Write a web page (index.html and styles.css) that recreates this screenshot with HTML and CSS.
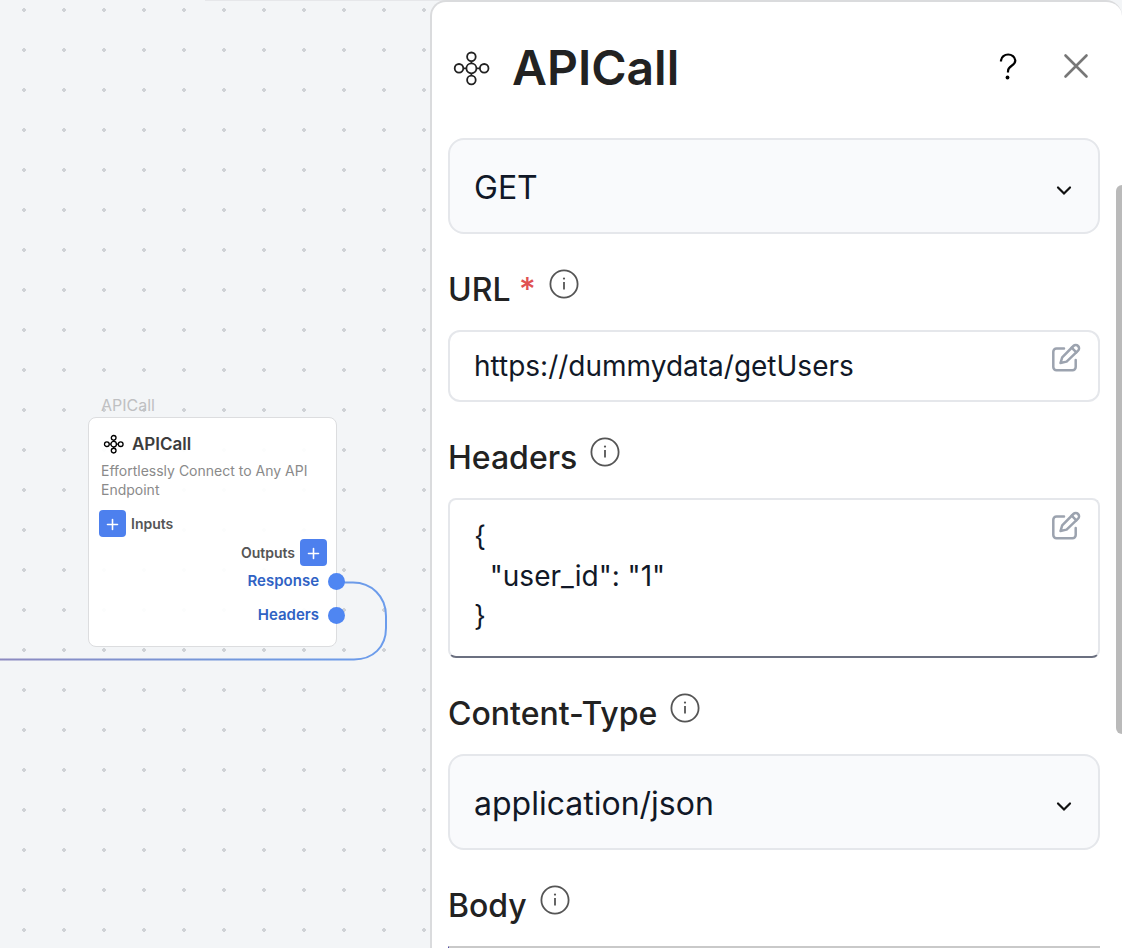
FILE: index.html
```
<!DOCTYPE html>
<html lang="en">
<head>
<meta charset="utf-8">
<meta name="viewport" content="width=device-width, initial-scale=1">
<title>APICall</title>
<link rel="stylesheet" href="styles.css">
</head>
<body>
<svg class="sprite" aria-hidden="true">
  <symbol id="hub" viewBox="0 0 40 40">
    <g fill="none" stroke="currentColor">
      <circle cx="19.4" cy="20.3" r="5"/>
      <circle cx="7" cy="20.3" r="4.3"/>
      <circle cx="32.2" cy="20.3" r="4.3"/>
      <circle cx="19.4" cy="8.8" r="4.3"/>
      <circle cx="19.4" cy="32" r="4.3"/>
      <path d="M11.3 20.3h3.1M24.4 20.3h3.5M19.4 13.1v2.2M19.4 25.3v2.4"/>
    </g>
  </symbol>
  <symbol id="info" viewBox="0 0 32 32">
    <circle cx="16" cy="16" r="13.6" fill="none" stroke="currentColor" stroke-width="1.8"/>
    <path d="M16 14v7.6" stroke="currentColor" stroke-width="1.8"/>
    <circle cx="16" cy="10.6" r="1.1" fill="currentColor"/>
  </symbol>
  <symbol id="edit" viewBox="0 0 32 32">
    <g fill="none" stroke="currentColor" stroke-width="2.5" stroke-linejoin="round" stroke-linecap="round">
      <path d="M14 6.500H6.500A3.200 3.200 0 0 0 3.300 9.700V25A3.200 3.200 0 0 0 6.500 28.200H22.500A3.200 3.200 0 0 0 25.700 25V18"/>
      <path d="M10.500 21L12.200 15.300L23.400 4A3.300 3.300 0 0 1 28.100 8.700L16.600 19.600Z"/>
      <path d="M21.700 5.700L26.300 10.300"/>
    </g>
  </symbol>
  <symbol id="chevron" viewBox="0 0 20 20">
    <path d="M4 7.500L10 13.500L16 7.500" fill="none" stroke="currentColor" stroke-width="2.200" stroke-linecap="round"/>
  </symbol>
  <symbol id="plus" viewBox="0 0 27 27">
    <path d="M13.500 9.500v10M8.500 14.500h10" stroke="currentColor" stroke-width="1.600" stroke-linecap="round"/>
  </symbol>
</svg>
<main class="app">
  <section class="canvas" aria-label="Flow canvas">
    <div class="canvas-edge"></div>
    <svg class="wire" width="400" height="100" viewBox="0 0 400 100" aria-hidden="true">
      <defs>
        <linearGradient id="wire-color" gradientUnits="userSpaceOnUse" x1="0" y1="0" x2="386" y2="0">
          <stop offset="0" stop-color="#8d8ac0"/>
          <stop offset="0.6" stop-color="#7398dc"/>
          <stop offset="1" stop-color="#6b9cec"/>
        </linearGradient>
      </defs>
      <path d="M337 12.500H353C371 12.500 386 26 386 46V58C386 77 373 89.500 354 89.500H0" fill="none" stroke="url(#wire-color)" stroke-width="2"/>
    </svg>
    <div class="node-group">
      <div class="node-tag">APICall</div>
      <article class="node">
        <h2 class="node-title"><svg class="node-icon" aria-hidden="true"><use href="#hub"/></svg>APICall</h2>
        <p class="node-text">Effortlessly Connect to Any API Endpoint</p>
        <div class="port-row"><button class="add" aria-label="Add input"><svg class="add-icon"><use href="#plus"/></svg></button>Inputs</div>
        <div class="port-row port-row-out">Outputs<button class="add" aria-label="Add output"><svg class="add-icon"><use href="#plus"/></svg></button></div>
        <div class="output output-first">Response<span class="handle"></span></div>
        <div class="output">Headers<span class="handle"></span></div>
      </article>
    </div>
  </section>
  <aside class="panel">
    <header class="panel-head">
      <svg class="panel-icon" aria-hidden="true"><use href="#hub"/></svg>
      <h1 class="panel-title">APICall</h1>
      <div class="panel-actions">
        <button class="icon-button help" aria-label="Help">
          <svg class="action-icon" viewBox="0 0 40 40"><path d="M13 15.500V14.500A7.200 6.800 0 0 1 27.300 14.500C27.300 20 20 19.500 20 25V26.500" fill="none" stroke="currentColor" stroke-width="2.200"/><circle cx="19.500" cy="31.500" r="1.900" fill="currentColor"/></svg>
        </button>
        <button class="icon-button close" aria-label="Close">
          <svg class="action-icon" viewBox="0 0 40 40"><path d="M9.500 9.500L30.500 30.500M30.500 9.500L9.500 30.500" fill="none" stroke="currentColor" stroke-width="2.600" stroke-linecap="round"/></svg>
        </button>
      </div>
    </header>
    <form class="form">
      <div class="control">
        <select class="field select" aria-label="Method"><option>GET</option><option>POST</option></select>
        <svg class="chevron" aria-hidden="true"><use href="#chevron"/></svg>
      </div>
      <div class="label-row">
        <label class="label" for="url">URL <span class="required">*</span></label>
        <button type="button" class="info" aria-label="About URL"><svg class="info-icon"><use href="#info"/></svg></button>
      </div>
      <div class="control">
        <input class="field input" id="url" type="text" value="https://dummydata/getUsers">
        <button type="button" class="edit" aria-label="Edit URL"><svg class="edit-icon"><use href="#edit"/></svg></button>
      </div>
      <div class="label-row">
        <label class="label" for="headers">Headers</label>
        <button type="button" class="info" aria-label="About headers"><svg class="info-icon"><use href="#info"/></svg></button>
      </div>
      <div class="control">
        <textarea class="field textarea" id="headers" rows="3" spellcheck="false">{
  "user_id": "1"
}</textarea>
        <button type="button" class="edit" aria-label="Edit headers"><svg class="edit-icon"><use href="#edit"/></svg></button>
      </div>
      <div class="label-row">
        <label class="label" for="type">Content-Type</label>
        <button type="button" class="info" aria-label="About content type"><svg class="info-icon"><use href="#info"/></svg></button>
      </div>
      <div class="control">
        <select class="field select" id="type"><option>application/json</option><option>text/plain</option></select>
        <svg class="chevron" aria-hidden="true"><use href="#chevron"/></svg>
      </div>
      <div class="label-row">
        <label class="label" for="body">Body</label>
        <button type="button" class="info" aria-label="About body"><svg class="info-icon"><use href="#info"/></svg></button>
      </div>
      <textarea class="field body-field" id="body" rows="3"></textarea>
    </form>
    <div class="scroll-thumb"></div>
  </aside>
</main>
</body>
</html>
```
FILE: styles.css
```
* { box-sizing: border-box; }
body {
  margin: 0;
  font-family: Inter, "Liberation Sans", sans-serif;
  color: #222;
  background: #f3f5f7;
}
button {
  padding: 0;
  border: 0;
  background: none;
  color: inherit;
  cursor: pointer;
}
.sprite { position: absolute; width: 0; height: 0; }
.app {
  display: grid;
  grid-template-columns: minmax(0, 430fr) minmax(0, 692fr);
  height: 100vh;
  overflow: hidden;
}

/* Canvas */
.canvas {
  position: relative;
  background: radial-gradient(circle, #cfd2d6 2px, #cfd2d600 2px) 4px -10px / 40px 40px #f3f5f7;
}
.canvas-edge {
  position: absolute;
  top: 0;
  left: 205px;
  right: -16px;
  height: 1px;
  background: #e6e7ea;
}
.wire { position: absolute; left: 0; top: 570px; }
.node-group { position: absolute; left: 88px; top: 394px; width: 249px; }
.node-tag {
  padding: 0 13px;
  font-size: 16px;
  line-height: 23px;
  color: #bfc0c2;
}
.node {
  padding: 13px 9px 14px 10px;
  border: 1px solid #dcdddf;
  border-radius: 8px;
  background: #fffffff0;
  font-size: 14px;
  color: #555;
}
.node-title {
  display: flex;
  align-items: center;
  gap: 7px;
  margin: 0;
  padding-left: 4px;
  font-size: 17px;
  line-height: 26px;
  font-weight: 600;
  color: #3c3c3c;
}
.node-icon { width: 22px; height: 22px; color: #000; stroke-width: 2.4; }
.node-text {
  margin: 4px 0 11px;
  padding: 0 2px;
  line-height: 19px;
  color: #8a8a8a;
}
.port-row {
  display: flex;
  align-items: center;
  gap: 5px;
  margin-bottom: 2px;
  font-weight: 600;
  line-height: 27px;
}
.port-row-out { justify-content: flex-end; }
.add {
  width: 27px;
  height: 27px;
  border-radius: 4px;
  background: #4d80ee;
  color: #fff;
}
.add-icon { display: block; width: 27px; height: 27px; }
.output {
  position: relative;
  padding-right: 8px;
  text-align: right;
  font-size: 15px;
  font-weight: 600;
  line-height: 34px;
  color: #2f62c4;
}
.output-first { margin-top: -4px; }
.handle {
  position: absolute;
  right: -18px;
  top: 9px;
  width: 17px;
  height: 17px;
  border-radius: 50%;
  background: #4f86f2;
}

/* Panel */
.panel {
  position: relative;
  padding: 0 22px 0 16px;
  border: 2px solid #dadbdd;
  border-width: 2px 0 0 2px;
  border-radius: 16px 16px 0 0;
  background: #fff;
  overflow: hidden;
}
.panel-head {
  display: flex;
  align-items: center;
  gap: 20px;
  padding: 36px 4px 40px;
}
.panel-icon { width: 40px; height: 40px; stroke-width: 1.8; }
.panel-title {
  margin: 0;
  font-size: 48px;
  line-height: 60px;
  font-weight: 600;
}
.panel-actions { display: flex; gap: 28px; margin: 0 0 4px auto; }
.icon-button { width: 40px; height: 40px; }
.action-icon { display: block; width: 40px; height: 40px; }
.help { color: #000; }
.close { color: #777; }
.control { position: relative; display: flex; }
.field {
  display: block;
  width: 100%;
  margin: 0;
  padding: 14px 24px;
  border: 2px solid #e5e7eb;
  border-radius: 12px;
  outline: 0;
  background: #fff;
  font-family: inherit;
  font-size: 28px;
  line-height: 40px;
  color: #111827;
  appearance: none;
}
.select {
  height: 96px;
  padding: 18px 24px 14px;
  border-radius: 16px;
  background: #f9fafc;
  font-size: 32px;
}
.chevron {
  position: absolute;
  right: 26px;
  top: 42px;
  width: 20px;
  height: 20px;
  color: #111;
  pointer-events: none;
}
.input { height: 72px; }
.textarea {
  height: 160px;
  padding: 16px 24px;
  border-radius: 8px;
  border-bottom-color: #6b7080;
  resize: none;
  overflow: hidden;
}
.edit { position: absolute; right: 18px; top: 12px; color: #9ca3af; }
.edit-icon { display: block; width: 32px; height: 32px; }
.label-row {
  display: flex;
  align-items: flex-start;
  gap: 12px;
  padding: 32px 0 16px;
}
.label { font-size: 32px; line-height: 48px; font-weight: 500; }
.required { color: #e05252; }
.info { padding-top: 2px; color: #555; }
.info-icon { display: block; width: 32px; height: 32px; }
.body-field {
  border-color: #c9c9c9;
  border-left: 1px solid #2a20a0;
  border-radius: 0;
  resize: none;
}
.scroll-thumb {
  position: absolute;
  right: 0;
  top: 183px;
  width: 6px;
  height: 58%;
  border-radius: 6px 0 0 6px;
  background: #bababa;
}
```
